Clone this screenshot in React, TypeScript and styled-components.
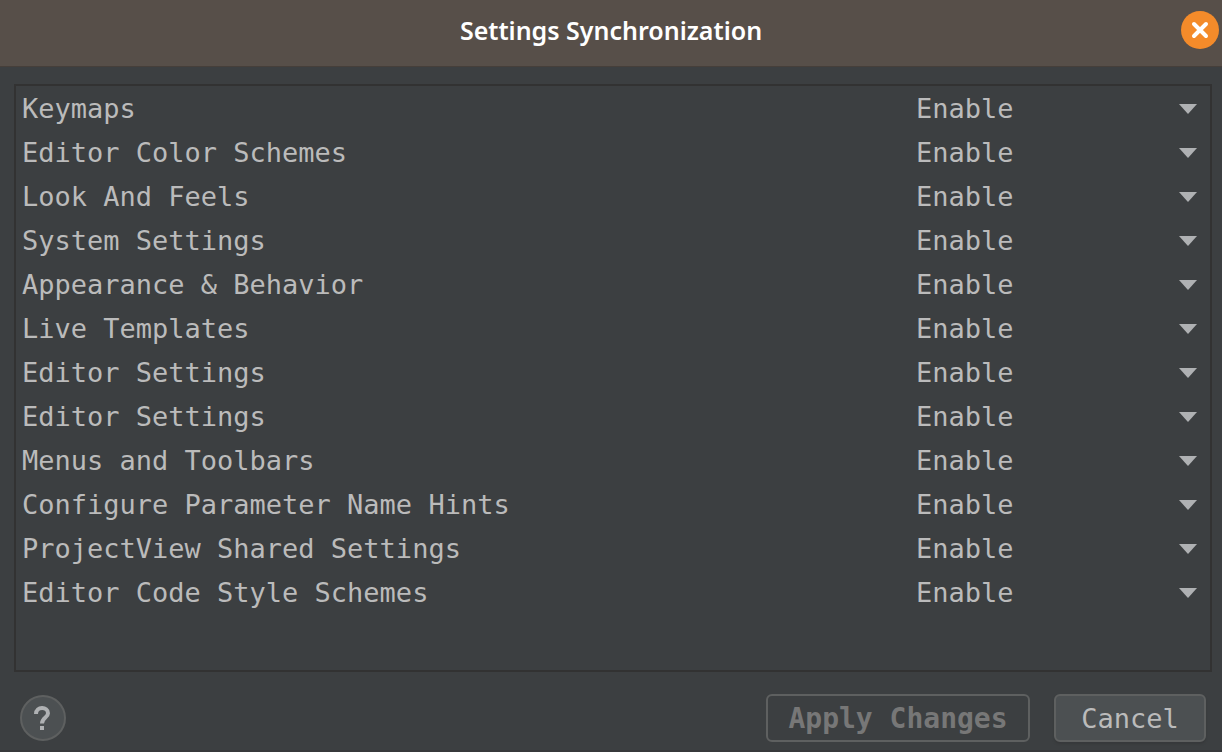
import React, { useId, useState } from "react";
import styled, { createGlobalStyle } from "styled-components";

const GlobalStyle = createGlobalStyle`
  *, *::before, *::after { box-sizing: border-box; }
  body {
    margin: 0;
    background: #3c3f41;
    color: #bbbbbb;
    font: 27px/32px "DejaVu Sans Mono", monospace;
  }
`;

const Dialog = styled.div`
  display: flex;
  flex-direction: column;
  min-height: 100vh;
  border-bottom: 2px solid #37393b;
`;

const TitleBar = styled.header`
  display: grid;
  grid-template-columns: 40px 1fr 40px;
  align-items: center;
  height: 67px;
  padding: 0 3px 6px;
  background: #574f49;
  border-bottom: 1px solid #463f3a;
`;

const Title = styled.h1`
  grid-column: 2;
  margin: 0;
  color: #ffffff;
  font: 600 25px/36px "Noto Sans", sans-serif;
  text-align: center;
`;

const CloseButton = styled.button`
  display: flex;
  justify-self: end;
  padding: 0;
  border: 0;
  border-radius: 50%;
  background: #f48b2a;
  cursor: pointer;
`;

const Body = styled.main`
  flex: 1;
  display: flex;
  padding: 17px 10px 0 14px;
`;

const SettingsList = styled.ul`
  flex: 1;
  margin: 0;
  padding: 1px 0 0;
  border: 2px solid #323232;
  list-style: none;
`;

const SettingRow = styled.li`
  display: grid;
  grid-template-columns: 1fr 294px;
  align-items: center;
  height: 44px;
`;

const SettingLabel = styled.label`
  padding-left: 6px;
  white-space: nowrap;
`;

const SelectBox = styled.div`
  display: grid;
  align-items: center;
  grid-template-columns: 1fr 31px;

  select {
    grid-area: 1 / 1 / 2 / 3;
    width: 100%;
    height: 44px;
    margin: 0;
    padding: 0;
    border: 0;
    background: transparent;
    color: inherit;
    font: inherit;
    appearance: none;
  }

  svg {
    grid-area: 1 / 2;
    pointer-events: none;
  }
`;

const Footer = styled.footer`
  display: flex;
  align-items: center;
  gap: 24px;
  padding: 22px 16px 8px 20px;
`;

const HelpButton = styled.button`
  display: flex;
  margin-right: auto;
  padding: 0;
  border: 2px solid #5e6060;
  border-radius: 50%;
  background: #4c5052;
`;

const ActionButton = styled.button<{ $width: number }>`
  width: ${({ $width }) => $width}px;
  height: 48px;
  padding: 2px 0 0;
  border: 2px solid #5e6060;
  border-radius: 6px;
  background: #4c5052;
  box-shadow: 0 2px 2px #37393b;
  color: #bbbbbb;
  font: inherit;

  &:disabled {
    background: transparent;
    box-shadow: none;
    color: #777777;
    font-weight: 700;
    font-size: 28px;
  }
`;

const settings = [
  "Keymaps",
  "Editor Color Schemes",
  "Look And Feels",
  "System Settings",
  "Appearance & Behavior",
  "Live Templates",
  "Editor Settings",
  "Editor Settings",
  "Menus and Toolbars",
  "Configure Parameter Name Hints",
  "ProjectView Shared Settings",
  "Editor Code Style Schemes",
];

function Setting({ name }: { name: string }) {
  const id = useId();
  const [value, setValue] = useState("Enable");
  return (
    <SettingRow>
      <SettingLabel htmlFor={id}>{name}</SettingLabel>
      <SelectBox>
        <select id={id} value={value} onChange={(e) => setValue(e.target.value)}>
          <option>Enable</option>
          <option>Disable</option>
        </select>
        <svg width="18" height="10" viewBox="0 0 18 10" aria-hidden="true">
          <path d="M0 0h18L9 10z" fill="#afb1b3" />
        </svg>
      </SelectBox>
    </SettingRow>
  );
}

export default function App() {
  return (
    <Dialog role="dialog" aria-labelledby="dialog-title">
      <GlobalStyle />
      <TitleBar>
        <Title id="dialog-title">Settings Synchronization</Title>
        <CloseButton aria-label="Close">
          <svg width="38" height="38" viewBox="0 0 38 38" aria-hidden="true">
            <path d="M13 13l12 12M25 13L13 25" stroke="#fff" strokeWidth="4" strokeLinecap="round" />
          </svg>
        </CloseButton>
      </TitleBar>
      <Body>
        <SettingsList>
          {settings.map((name, index) => (
            <Setting key={index} name={name} />
          ))}
        </SettingsList>
      </Body>
      <Footer>
        <HelpButton aria-label="Help">
          <svg width="42" height="42" viewBox="0 0 42 42" fill="none" aria-hidden="true">
            <path
              d="M14 17C14 9.2 26 9.2 26 16.2C26 20.6 20 20.6 20 26.6"
              stroke="#afb1b3"
              strokeWidth="4"
            />
            <path d="M18 29h4v4h-4z" fill="#afb1b3" />
          </svg>
        </HelpButton>
        <ActionButton $width={264} disabled>
          Apply Changes
        </ActionButton>
        <ActionButton $width={152}>Cancel</ActionButton>
      </Footer>
    </Dialog>
  );
}
